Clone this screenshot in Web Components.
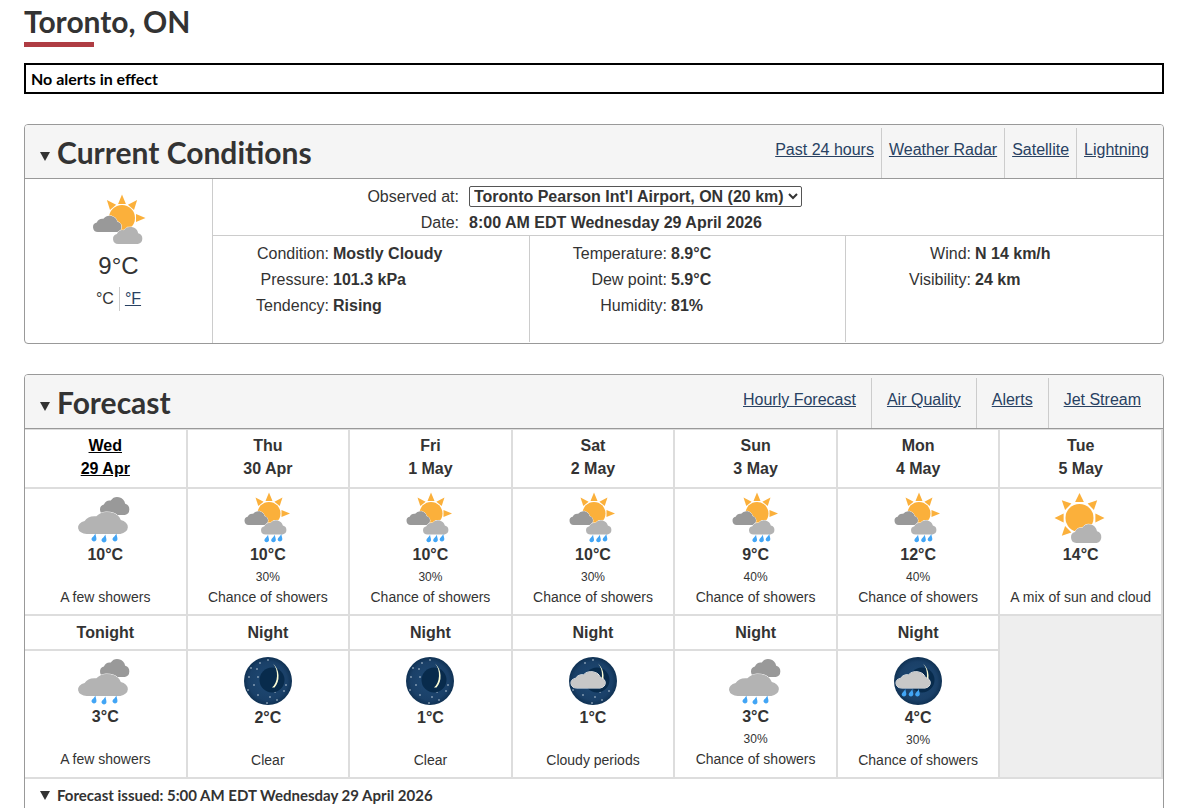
<!DOCTYPE html>
<html lang="en">
<head>
<meta charset="utf-8">
<title>Toronto, ON</title>
<style>
  html, body { margin: 0; height: 808px; overflow: hidden; background: #fff; }
  body { color: #333; font: 16px/23px "Liberation Sans", Arial, sans-serif; }
</style>
</head>
<body>
<wx-page>
  <wx-title>Toronto, ON</wx-title>
  <wx-alert>No alerts in effect</wx-alert>

  <wx-panel heading="Current Conditions" links="Past 24 hours|Weather Radar|Satellite|Lightning" pad="7" end="14">
    <wx-current></wx-current>
  </wx-panel>

  <wx-panel class="forecast" heading="Forecast" links="Hourly Forecast|Air Quality|Alerts|Jet Stream" pad="15" end="22">
    <wx-forecast>
      <wx-head today line1="Wed" line2="29 Apr"></wx-head>
      <wx-head line1="Thu" line2="30 Apr"></wx-head>
      <wx-head line1="Fri" line2="1 May"></wx-head>
      <wx-head line1="Sat" line2="2 May"></wx-head>
      <wx-head line1="Sun" line2="3 May"></wx-head>
      <wx-head line1="Mon" line2="4 May"></wx-head>
      <wx-head line1="Tue" line2="5 May"></wx-head>

      <wx-cell icon="rain" temp="10°C" text="A few showers"></wx-cell>
      <wx-cell icon="sunshowers" temp="10°C" pop="30%" text="Chance of showers"></wx-cell>
      <wx-cell icon="sunshowers" temp="10°C" pop="30%" text="Chance of showers"></wx-cell>
      <wx-cell icon="sunshowers" temp="10°C" pop="30%" text="Chance of showers"></wx-cell>
      <wx-cell icon="sunshowers" temp="9°C" pop="40%" text="Chance of showers"></wx-cell>
      <wx-cell icon="sunshowers" temp="12°C" pop="40%" text="Chance of showers"></wx-cell>
      <wx-cell icon="suncloud" temp="14°C" text="A mix of sun and cloud"></wx-cell>

      <wx-head line1="Tonight"></wx-head>
      <wx-head line1="Night"></wx-head>
      <wx-head line1="Night"></wx-head>
      <wx-head line1="Night"></wx-head>
      <wx-head line1="Night"></wx-head>
      <wx-head line1="Night"></wx-head>
      <wx-blank></wx-blank>

      <wx-cell icon="rain" temp="3°C" text="A few showers"></wx-cell>
      <wx-cell icon="moon" temp="2°C" text="Clear"></wx-cell>
      <wx-cell icon="moon" temp="1°C" text="Clear"></wx-cell>
      <wx-cell icon="mooncloud" temp="1°C" text="Cloudy periods"></wx-cell>
      <wx-cell icon="rain" temp="3°C" pop="30%" text="Chance of showers"></wx-cell>
      <wx-cell icon="moonrain" temp="4°C" pop="30%" text="Chance of showers"></wx-cell>
    </wx-forecast>
    <wx-issued>Forecast issued: 5:00 AM EDT Wednesday 29 April 2026</wx-issued>
  </wx-panel>
</wx-page>

<script>
// small helper, every element below is just a shadow root with its own style
const define = (name, html, extra = {}) => {
  customElements.define(name, class extends HTMLElement {
    constructor() {
      super();
      this.attachShadow({ mode: "open" });
    }
    connectedCallback() {
      this.shadowRoot.innerHTML = typeof html === "function" ? html(this) : html;
    }
  });
};

const HEADING = `"Lato", "Liberation Sans", sans-serif`;

/* ---------- icon drawing, viewBox is the 60x51 of the original icons ---------- */
const SUN = "#fbb03b", DARK = "#999", LIGHT = "#b3b3b3", DROP = "#42a5f5";

const cloud = (x, y, w, h, fill) => {
  const d = "M17 70A17 17 0 0 1 13 36.5A22 22 0 0 1 36 24A27 27 0 0 1 84 34A18.500 18.500 0 0 1 83 70Z";
  return `<path transform="translate(${x} ${y}) scale(${w / 100} ${h / 70})" d="${d}" fill="${fill}"
    stroke="#fff" stroke-width="1" vector-effect="non-scaling-stroke" paint-order="stroke"/>`;
};

const drop = (x, y, h, fill = DROP) => {
  const w = h * 0.58;
  return `<path d="M${x + w * 0.28} ${y}C${x + w * 0.3} ${y + h * 0.3} ${x + w * 0.55} ${y + h * 0.45} ${x + w * 0.45} ${y + h * 0.72}
    A${w * 0.5} ${w * 0.5} 0 0 1 ${x - w * 0.48} ${y + h * 0.68}C${x - w * 0.5} ${y + h * 0.45} ${x + w * 0.1} ${y + h * 0.25} ${x + w * 0.28} ${y}Z" fill="${fill}"/>`;
};

const ray = (cx, cy, r, len, half, deg) => {
  const a = deg * Math.PI / 180, t = half / r;
  const p = (rad, ang) => `${(cx + rad * Math.cos(ang)).toFixed(1)} ${(cy + rad * Math.sin(ang)).toFixed(1)}`;
  return `<path d="M${p(r + len, a)}L${p(r, a - t)}L${p(r, a + t)}Z" fill="${SUN}"/>`;
};

const sun = (cx, cy, r, gap, len, half, angles) =>
  angles.map((a) => ray(cx, cy, r + gap, len, half, a)).join("") +
  `<circle cx="${cx}" cy="${cy}" r="${r}" fill="${SUN}"/>`;

const STARS = [[17, 7], [25, 4], [8, 12], [14, 13], [6, 21], [15, 21], [19, 28], [11, 29],
  [5, 34], [15, 39], [27, 41], [32, 36], [41, 35], [43, 29], [24, 47], [34, 44]];

const nightDisc = (id) => `<defs><radialGradient id="${id}" cx="50%" cy="50%" r="50%">
    <stop offset="0" stop-color="#1f4a75"/><stop offset=".8" stop-color="#1a4068"/><stop offset="1" stop-color="#0f3153"/>
  </radialGradient></defs><circle cx="25" cy="25" r="24" fill="url(#${id})"/>`;

const stars = (list) => list.map(([x, y]) =>
  `<circle cx="${x}" cy="${y}" r=".8" fill="#c9d6e2"/>`).join("");

const crescent = `<circle cx="29" cy="24" r="12.500" fill="#082b4c"/>
  <path d="M30 7.500A17.500 17.500 0 0 1 31.500 31.500A15 15 0 0 1 29 31.500C35 27 36 14 30 7.500Z" fill="#fcfdd6"/>`;

const ICONS = {
  suncloud: [60, 51, () =>
    sun(28.5, 26, 14, 2.5, 8.5, 4.5, [-90, -45, -135, 180, 0, 45, 135]) +
    cloud(20, 28, 31, 23, LIGHT)],
  sunbig: [60, 51, () =>
    sun(33, 24, 13, 1.5, 9, 4, [-90, -130, -50, 0]) +
    cloud(4, 18, 29, 20, DARK) + cloud(24, 29, 30, 21, LIGHT)],
  sunshowers: [60, 51, () =>
    sun(31, 21.5, 11.5, 1.5, 8, 3.5, [-90, -130, -50, 0]) +
    cloud(6.5, 16, 24, 17, DARK) + cloud(23, 25, 26, 17.500, LIGHT) +
    drop(28.7, 42.7, 8.5) + drop(35.5, 42.7, 8.5) + drop(42, 42, 8.5)],
  rain: [60, 51, () =>
    cloud(25, 1, 30, 22, DARK) + cloud(3, 15, 51, 27, LIGHT) +
    drop(19, 41.5, 9) + drop(29, 42.5, 9) + drop(40, 41.5, 9)],
  moon: [50, 50, () => nightDisc("m") + stars(STARS) + crescent],
  mooncloud: [50, 50, () => nightDisc("c") +
    stars(STARS.filter(([, y]) => y < 10 || y > 33)) + crescent + cloud(3, 12, 35, 20, "#c8c8c8")],
  moonrain: [50, 50, () => nightDisc("r") + crescent + cloud(3, 12, 35, 20, "#c8c8c8") +
    drop(11, 33, 8.5) + drop(18, 33, 8.5) + drop(24.500, 33, 8.5)],
};

define("wx-icon", (el) => {
  const [w, h, draw] = ICONS[el.getAttribute("name")];
  return `<style>:host { display: block; width: ${w}px; height: ${h}px; margin: 0 auto; }
    svg { display: block; overflow: visible; }</style>
    <svg width="${w}" height="${h}" viewBox="0 0 ${w} ${h}" aria-hidden="true">${draw()}</svg>`;
});

/* ---------- page furniture ---------- */
define("wx-page", `<style>
  :host { display: flex; flex-direction: column; padding: 0 24px; }
</style><slot></slot>`);

define("wx-title", `<style>
  :host { display: block; height: 47px; box-sizing: border-box; margin-bottom: 16px; }
  h1 { margin: 0; font: 700 30px/42px ${HEADING}; color: #333; }
  h1::after { content: ""; display: block; width: 70px; height: 5px; background: #af3c43; }
</style><h1><slot></slot></h1>`);

define("wx-alert", `<style>
  :host { display: block; height: 31px; box-sizing: border-box; border: 2px solid #000; padding: 0 5px;
    margin-bottom: 30px; font: 700 16px/27px ${HEADING}; color: #000; }
</style><slot></slot>`);

define("wx-panel", (el) => {
  const pad = el.getAttribute("pad"), end = el.getAttribute("end");
  const links = el.getAttribute("links").split("|")
    .map((t) => `<li><a href="#">${t}</a></li>`).join("");
  return `<style>
    :host { display: block; border: 1px solid #999; border-radius: 4px; margin-bottom: 30px; overflow: hidden; background: #fff; }
    header { display: flex; justify-content: space-between; height: 53px; background: #f5f5f5;
      border-bottom: 1px solid #999; padding: 0 ${end}px 0 15px; }
    h2 { margin: 0; display: flex; align-items: center; gap: 7px; font: 700 30px/52px ${HEADING}; color: #333; }
    h2::before { content: ""; margin-top: 9px; border: solid transparent; border-width: 9px 5px 0;
      border-top-color: #333; }
    ul { display: flex; list-style: none; margin: 3px 0 0; padding: 0; }
    li { padding: 0 ${pad}px; line-height: 43px; border-left: 1px solid #ccc; }
    li:first-child { border-left: 0; }
    li:last-child { padding-right: 0; }
    a { color: #284162; }
  </style>
  <header><h2>${el.getAttribute("heading")}</h2><ul>${links}</ul></header>
  <slot></slot>`;
});

define("wx-current", `<style>
  :host { display: grid; grid-template-columns: 188px 1fr; height: 164px; color: #333; }
  .now { border-right: 1px solid #ccc; text-align: center; padding-top: 15px; }
  .temp { font-size: 24px; line-height: 30px; margin-top: 6px; }
  .units { font-size: 16px; line-height: 24px; margin-top: 6px; display: flex; justify-content: center; }
  .units span { padding-right: 5px; }
  .units a { padding-left: 5px; border-left: 1px solid #ccc; color: #284162; }
  .obs { height: 57px; box-sizing: border-box; border-bottom: 1px solid #ccc; padding-top: 4px; }
  .row { display: grid; grid-template-columns: 246px 1fr; column-gap: 10px; height: 26px; align-items: center; }
  .row dt { text-align: right; }
  dl, dd { margin: 0; }
  dd { font-weight: 700; }
  select { font: 700 16px "Liberation Sans", Arial, sans-serif; color: #333; width: 333px; height: 21px;
    background: #fff; border: 1px solid #555; border-radius: 2px; padding: 0; }
  .cols { display: grid; grid-template-columns: 316px 316px 1fr; height: 106px; padding-top: 0; }
  .col { border-left: 1px solid #ccc; padding-top: 4px; }
  .col:first-child { border-left: 0; }
  .col .row { grid-template-columns: var(--w) 1fr; column-gap: 4px; }
</style>
<div class="now">
  <wx-icon name="sunbig"></wx-icon>
  <div class="temp">9°C</div>
  <div class="units"><span>°C</span><a href="#">°F</a></div>
</div>
<div>
  <dl class="obs">
    <div class="row"><dt>Observed at:</dt><dd><select><option>Toronto Pearson Int'l Airport, ON (20 km)</option></select></dd></div>
    <div class="row"><dt>Date:</dt><dd>8:00 AM EDT Wednesday 29 April 2026</dd></div>
  </dl>
  <div class="cols">
    <dl class="col" style="--w:116px">
      <div class="row"><dt>Condition:</dt><dd>Mostly Cloudy</dd></div>
      <div class="row"><dt>Pressure:</dt><dd>101.3 kPa</dd></div>
      <div class="row"><dt>Tendency:</dt><dd>Rising</dd></div>
    </dl>
    <dl class="col" style="--w:137px">
      <div class="row"><dt>Temperature:</dt><dd>8.9°C</dd></div>
      <div class="row"><dt>Dew point:</dt><dd>5.9°C</dd></div>
      <div class="row"><dt>Humidity:</dt><dd>81%</dd></div>
    </dl>
    <dl class="col" style="--w:125px">
      <div class="row"><dt>Wind:</dt><dd>N 14 km/h</dd></div>
      <div class="row"><dt>Visibility:</dt><dd>24 km</dd></div>
    </dl>
  </div>
</div>`);

/* ---------- forecast table ---------- */
define("wx-forecast", `<style>
  :host { display: grid; grid-template-columns: repeat(7, 1fr); grid-template-rows: 59px 127px 35px 128px;
    border-top: 1px solid #ddd; border-bottom: 0; }
</style><slot></slot>`);

const CELL = `box-sizing: border-box; border-right: 2px solid #ddd; border-bottom: 2px solid #ddd; text-align: center; min-width: 0;`;

define("wx-head", (el) => {
  const today = el.hasAttribute("today");
  const two = el.hasAttribute("line2");
  return `<style>
    :host { display: block; ${CELL} font-weight: 700; padding-top: ${two ? 4 : 5}px; color: ${today ? "#000" : "#333"}; }
    div { text-decoration: ${today ? "underline" : "none"}; }
  </style><div>${el.getAttribute("line1")}</div>${two ? `<div>${el.getAttribute("line2")}</div>` : ""}`;
});

define("wx-cell", (el) => `<style>
  :host { display: block; ${CELL} padding-top: 3px; }
  .temp { font-weight: 700; line-height: 22px; margin-top: 1px; height: 22px; }
  .pop { font-size: 12px; line-height: 18px; height: 18px; margin-top: 2px; }
  .text { font-size: 14px; line-height: 20px; margin-top: 1px; }
  :host([icon^="moon"]) wx-icon { margin-top: 2px; }
</style>
<wx-icon name="${el.getAttribute("icon")}"></wx-icon>
<div class="temp">${el.getAttribute("temp")}</div>
<div class="pop">${el.getAttribute("pop") || ""}</div>
<div class="text">${el.getAttribute("text")}</div>`);

define("wx-blank", `<style>
  :host { display: block; grid-row: span 2; background: #eee; border-right: 2px solid #ddd; border-bottom: 2px solid #ddd; }
</style>`);

define("wx-issued", `<style>
  :host { display: flex; align-items: center; gap: 7px; padding: 0 15px; height: 32px; border-top: 0;
    font: 700 15px/32px ${HEADING}; color: #333; }
  :host::before { content: ""; border: solid transparent; border-width: 9px 5.5px 0; border-top-color: #333; }
</style><slot></slot>`);
</script>
</body>
</html>
